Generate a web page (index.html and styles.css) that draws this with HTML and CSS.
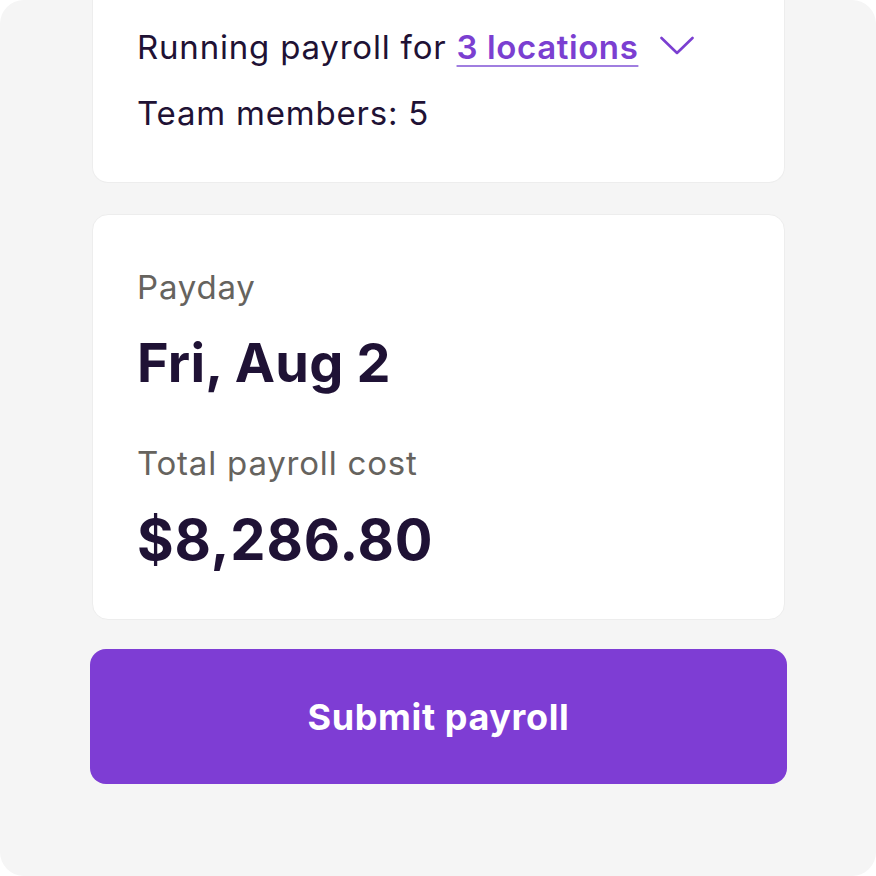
FILE: index.html
```html
<!DOCTYPE html>
<html lang="en">
<head>
  <meta charset="UTF-8" />
  <meta name="viewport" content="width=device-width, initial-scale=1.0"/>
  <title>Run payroll</title>
  <link rel="stylesheet" href="styles.css">
</head>
<body>
  <div class="panel">
    <div class="card summary">
      <p class="line">Running payroll for <a href="#" class="link">3 locations</a><svg class="chevron" width="34" height="20" viewBox="0 0 34 20" aria-hidden="true"><path d="M1.5 2 L17 17 L32.5 2" fill="none" stroke="#7b3fd1" stroke-width="2.6" stroke-linecap="round" stroke-linejoin="round"/></svg></p>
      <p class="line">Team members: 5</p>
    </div>

    <div class="card details">
      <p class="label">Payday</p>
      <p class="value">Fri, Aug 2</p>
      <p class="label gap">Total payroll cost</p>
      <p class="value amount">$8,286.80</p>
    </div>

    <button class="btn">Submit payroll</button>
  </div>
</body>
</html>
```

FILE: styles.css
```css
* {
  box-sizing: border-box;
}

body {
  margin: 0;
  background: #ffffff;
  font-family: Inter, "Noto Sans", sans-serif;
  color: #1f1235;
}

p {
  margin: 0;
}

.panel {
  height: 876px;
  background: #f5f5f5;
  border-radius: 24px;
  padding: 0 89px 0 90px;
  display: flex;
  flex-direction: column;
}

.card {
  background: #ffffff;
  border: 1px solid #ededed;
  margin: 0 2px;
  padding: 0 44px;
}

.summary {
  border-top: none;
  border-radius: 0 0 16px 16px;
  padding-top: 27px;
  padding-bottom: 49px;
  display: flex;
  flex-direction: column;
  gap: 26px;
}

.line {
  font-size: 33px;
  line-height: 40px;
  letter-spacing: 0.8px;
  white-space: nowrap;
}

.link {
  color: #7b3fd1;
  font-weight: 600;
  letter-spacing: 0.6px;
  text-decoration: underline;
  text-decoration-color: #a07ee0;
  text-decoration-thickness: 2px;
  text-underline-offset: 6px;
}

.chevron {
  margin-left: 22px;
  vertical-align: 3px;
}

.details {
  margin-top: 31px;
  border-radius: 16px;
  padding-top: 52px;
  padding-bottom: 49px;
}

.label {
  font-size: 33px;
  line-height: 40px;
  letter-spacing: 0.8px;
  color: #66635e;
}

.label.gap {
  margin-top: 50px;
}

.value {
  margin-top: 26px;
  font-size: 54px;
  line-height: 60px;
  font-weight: 700;
  letter-spacing: 0.2px;
}

.value.amount {
  margin-top: 27px;
  font-size: 56px;
  letter-spacing: 0.9px;
}

.btn {
  margin-top: 29px;
  height: 135px;
  flex-shrink: 0;
  border: none;
  border-radius: 16px;
  background: #7e3dd4;
  color: #ffffff;
  font-family: inherit;
  font-size: 36px;
  font-weight: 700;
  letter-spacing: 0.6px;
  cursor: pointer;
}
```
